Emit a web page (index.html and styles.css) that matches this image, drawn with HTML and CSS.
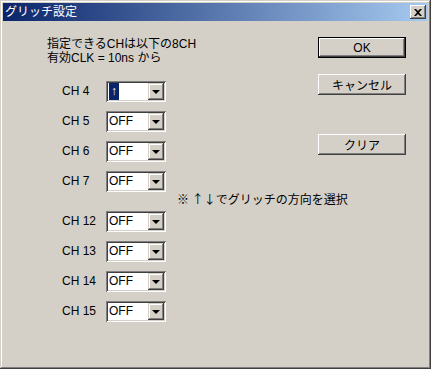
FILE: index.html
```html
<!DOCTYPE html>
<html lang="ja">
<head>
    <meta charset="UTF-8">
    <title>グリッチ設定</title>
    <link rel="stylesheet" href="styles.css">
</head>
<body>
    <div class="window">
        <div class="titlebar">
            <span class="title">グリッチ設定</span>
            <span class="close">
                <svg width="8" height="7" viewBox="0 0 8 7"><path d="M0 0h2l2 2 2-2h2L5 3.5 8 7H6L4 5 2 7H0l3-3.5z" fill="#000"/></svg>
            </span>
        </div>
        <div class="content">
            <div class="left">
                <p class="info">指定できるCHは以下の8CH<br>有効CLK = 10ns から</p>
                <div class="rows">
                    <div class="row">
                        <span class="label">CH 4</span>
                        <div class="combo"><span class="value"><span class="sel">↑</span></span><span class="drop"></span></div>
                    </div>
                    <div class="row">
                        <span class="label">CH 5</span>
                        <div class="combo"><span class="value">OFF</span><span class="drop"></span></div>
                    </div>
                    <div class="row">
                        <span class="label">CH 6</span>
                        <div class="combo"><span class="value">OFF</span><span class="drop"></span></div>
                    </div>
                    <div class="row">
                        <span class="label">CH 7</span>
                        <div class="combo"><span class="value">OFF</span><span class="drop"></span></div>
                        <span class="note">※ ↑↓でグリッチの方向を選択</span>
                    </div>
                    <div class="row">
                        <span class="label">CH 12</span>
                        <div class="combo"><span class="value">OFF</span><span class="drop"></span></div>
                    </div>
                    <div class="row">
                        <span class="label">CH 13</span>
                        <div class="combo"><span class="value">OFF</span><span class="drop"></span></div>
                    </div>
                    <div class="row">
                        <span class="label">CH 14</span>
                        <div class="combo"><span class="value">OFF</span><span class="drop"></span></div>
                    </div>
                    <div class="row">
                        <span class="label">CH 15</span>
                        <div class="combo"><span class="value">OFF</span><span class="drop"></span></div>
                    </div>
                </div>
            </div>
            <div class="buttons">
                <button class="btn default">OK</button>
                <button class="btn">キャンセル</button>
                <button class="btn clear">クリア</button>
            </div>
        </div>
    </div>
</body>
</html>
```

FILE: styles.css
```css
html, body {
    margin: 0;
    padding: 0;
    background: #d4d0c8;
}
body {
    font-family: "Liberation Sans", "Noto Sans CJK JP", sans-serif;
    font-size: 12px;
    color: #000;
}
.window {
    width: 431px;
    height: 369px;
    box-sizing: border-box;
    padding: 3px;
    background: #d4d0c8;
    box-shadow: inset -1px -1px #404040, inset 1px 1px #d4d0c8,
                inset -2px -2px #808080, inset 2px 2px #fff;
}
.titlebar {
    height: 18px;
    display: flex;
    align-items: center;
    justify-content: space-between;
    padding: 0 2px 0 2px;
    background: linear-gradient(to right, #0a246a, #a6caf0);
}
.title {
    color: #fff;
    font-size: 12px;
    line-height: 18px;
}
.close {
    width: 16px;
    height: 14px;
    box-sizing: border-box;
    display: flex;
    align-items: center;
    justify-content: center;
    background: #d4d0c8;
    box-shadow: inset -1px -1px #404040, inset 1px 1px #fff,
                inset -2px -2px #808080, inset 2px 2px #d4d0c8;
}
.content {
    display: flex;
    padding: 16px 0 0 44px;
}
.left {
    width: 271px;
    flex: none;
}
.info {
    margin: 0;
    line-height: 14px;
}
.rows {
    margin: 16px 0 0 15px;
    display: flex;
    flex-direction: column;
    gap: 9px;
}
.row {
    display: flex;
    align-items: flex-start;
}
.label {
    width: 44px;
    flex: none;
    line-height: 21px;
}
.combo {
    width: 60px;
    height: 21px;
    flex: none;
    box-sizing: border-box;
    padding: 2px;
    display: flex;
    background: #fff;
    box-shadow: inset 1px 1px #808080, inset -1px -1px #fff,
                inset 2px 2px #404040, inset -2px -2px #d4d0c8;
}
.value {
    flex: 1;
    line-height: 17px;
    padding-left: 1px;
}
.sel {
    display: inline-block;
    background: #0a246a;
    color: #fff;
    width: 10px;
    text-align: center;
}
.drop {
    width: 16px;
    height: 17px;
    box-sizing: border-box;
    display: flex;
    align-items: center;
    justify-content: center;
    background: #d4d0c8;
    box-shadow: inset -1px -1px #404040, inset 1px 1px #d4d0c8,
                inset -2px -2px #808080, inset 2px 2px #fff;
}
.drop::after {
    content: "";
    border-left: 4px solid transparent;
    border-right: 4px solid transparent;
    border-top: 4px solid #000;
    margin-top: 1px;
}
.note {
    flex: none;
    margin: 22px 0 -3px 11px;
    line-height: 12px;
    font-family: "Noto Sans CJK JP", sans-serif;
    white-space: nowrap;
}
.buttons {
    display: flex;
    flex-direction: column;
    gap: 16px;
}
.btn {
    width: 88px;
    height: 21px;
    box-sizing: border-box;
    border: none;
    padding: 0;
    font-family: "Liberation Sans", "Noto Sans CJK JP", sans-serif;
    font-size: 12px;
    color: #000;
    background: #d4d0c8;
    box-shadow: inset -1px -1px #404040, inset 1px 1px #fff,
                inset -2px -2px #808080, inset 2px 2px #d4d0c8;
}
.btn.default {
    box-shadow: inset 0 0 0 1px #000, inset -2px -2px #404040, inset 2px 2px #fff,
                inset -3px -3px #808080;
}
.btn.clear {
    margin-top: 23px;
}
```
